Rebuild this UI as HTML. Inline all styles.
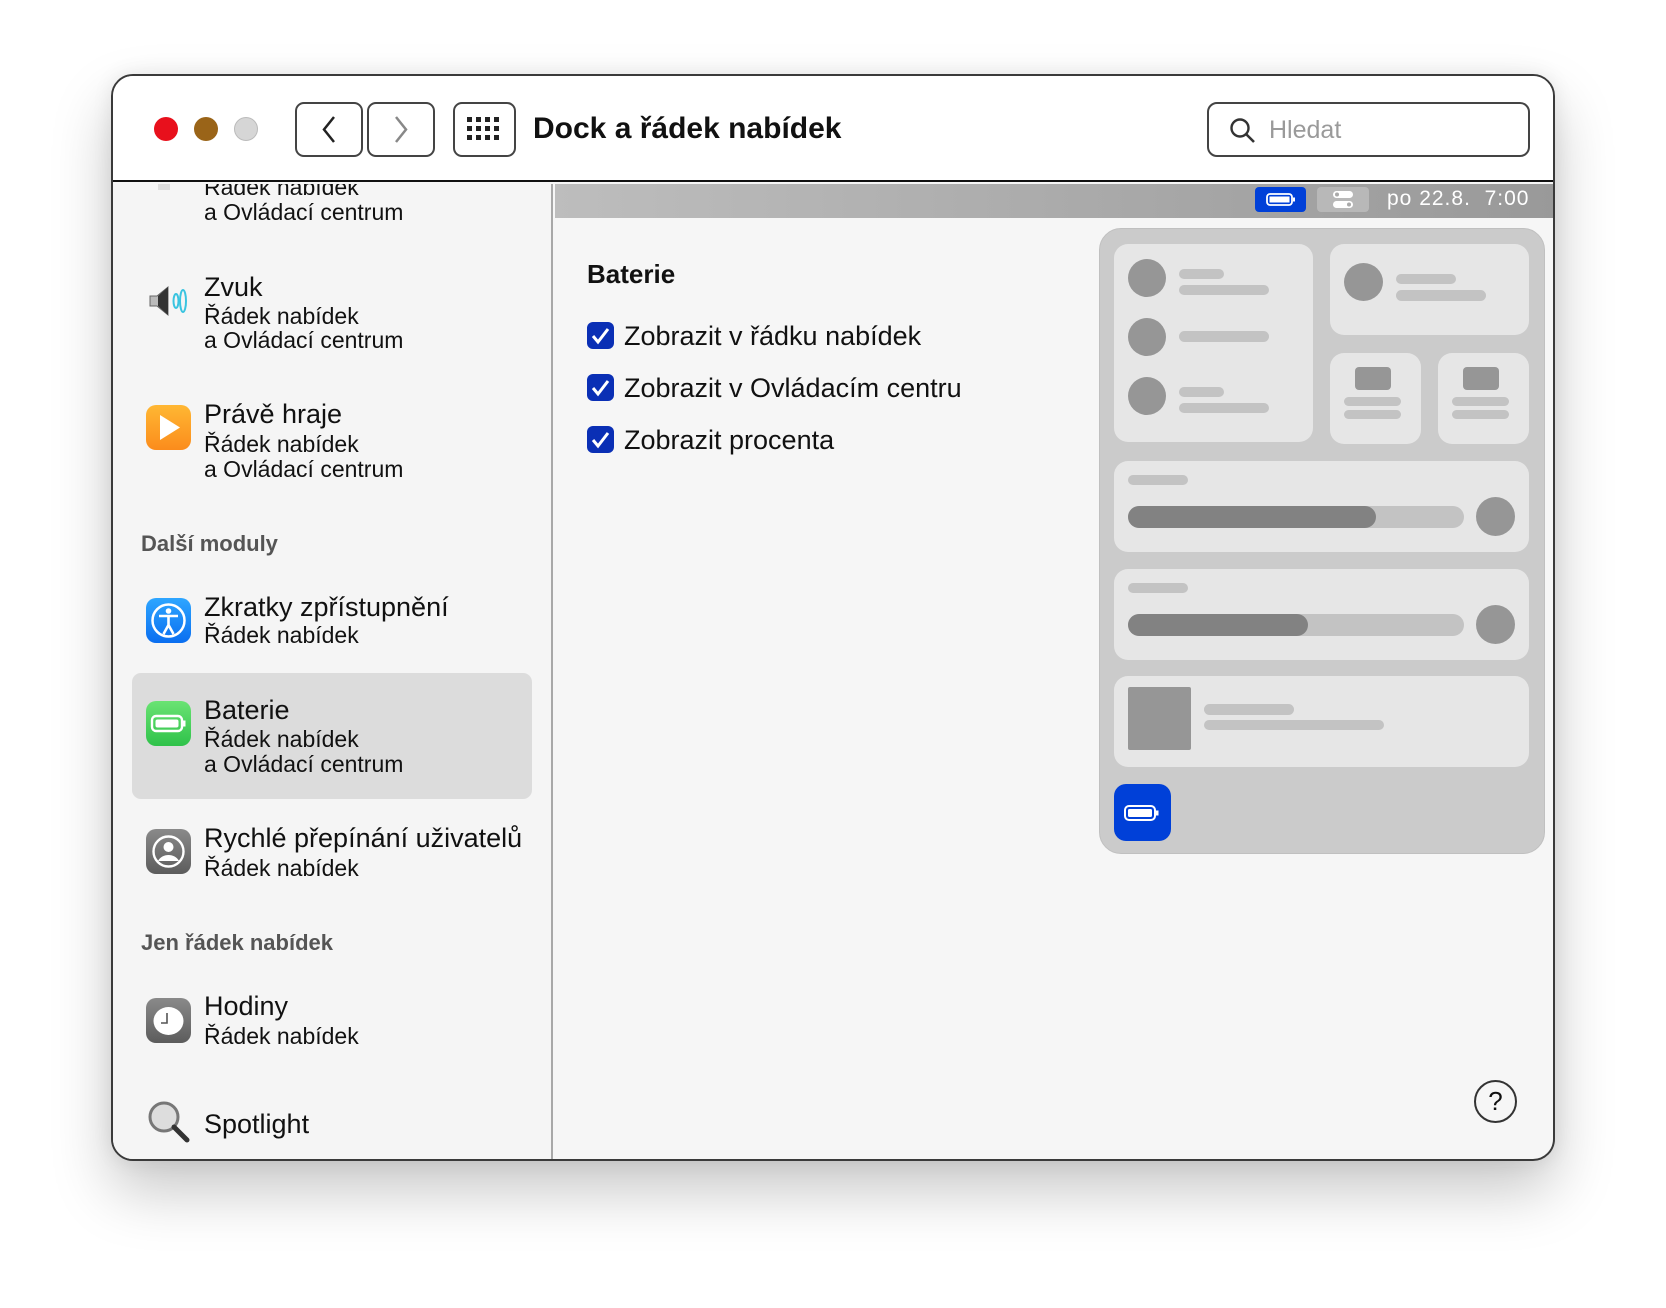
<!DOCTYPE html>
<html><head><meta charset="utf-8"><style>
*{margin:0;padding:0;box-sizing:border-box}
body{width:1666px;height:1308px;background:#fff;position:relative;overflow:hidden;font-family:"Liberation Sans",sans-serif;color:#111}
.a{position:absolute}
.win{left:111px;top:74px;width:1444px;height:1087px;border:2px solid #3a3a3a;border-radius:22px;overflow:hidden;background:#f6f6f6;box-shadow:0 30px 60px rgba(0,0,0,.22),0 0 20px rgba(0,0,0,.08)}
.t{position:absolute;white-space:nowrap;line-height:30px}
.ti{font-size:27px}
.su{font-size:23px}
.hd{font-size:22px;font-weight:bold;color:#555}
.ic{position:absolute;left:33px;width:45px;height:45px;border-radius:10px}
.tile{position:absolute;background:#e6e6e6;border-radius:14px}
.c{position:absolute;background:#969696;border-radius:50%}
.b{position:absolute;background:#c3c3c3;border-radius:8px}
.cb{position:absolute;left:474px;width:27px;height:27px;border-radius:6px;background:#0a2fb5}
</style></head><body>
<div class="a win">
 <!-- titlebar -->
 <div class="a" style="left:0;top:0;width:100%;height:106px;background:#fff;border-bottom:2px solid #111"></div>
 <div class="a" style="left:41px;top:41px;width:24px;height:24px;border-radius:50%;background:#e8101c"></div>
 <div class="a" style="left:81px;top:41px;width:24px;height:24px;border-radius:50%;background:#9a6418"></div>
 <div class="a" style="left:121px;top:41px;width:24px;height:24px;border-radius:50%;background:#d6d6d6;border:1px solid #bbb"></div>
 <div class="a" style="left:182px;top:26px;width:68px;height:55px;border:2px solid #444;border-radius:9px"><svg width="64" height="51"><path d="M37 13 L27 25.5 L37 38" fill="none" stroke="#222" stroke-width="2.5"/></svg></div>
 <div class="a" style="left:254px;top:26px;width:68px;height:55px;border:2px solid #444;border-radius:9px"><svg width="64" height="51"><path d="M27 13 L37 25.5 L27 38" fill="none" stroke="#888" stroke-width="2.5"/></svg></div>
 <div class="a" style="left:340px;top:26px;width:63px;height:55px;border:2px solid #444;border-radius:9px"><svg width="59" height="51"><g fill="#222">
 <rect x="12" y="13" width="5" height="5"/><rect x="21" y="13" width="5" height="5"/><rect x="30" y="13" width="5" height="5"/><rect x="39" y="13" width="5" height="5"/>
 <rect x="12" y="22" width="5" height="5"/><rect x="21" y="22" width="5" height="5"/><rect x="30" y="22" width="5" height="5"/><rect x="39" y="22" width="5" height="5"/>
 <rect x="12" y="31" width="5" height="5"/><rect x="21" y="31" width="5" height="5"/><rect x="30" y="31" width="5" height="5"/><rect x="39" y="31" width="5" height="5"/></g></svg></div>
 <div class="t" style="left:420px;top:36px;font-size:30px;font-weight:bold;line-height:34px">Dock a řádek nabídek</div>
 <div class="a" style="left:1094px;top:26px;width:323px;height:55px;border:2px solid #444;border-radius:10px">
  <svg class="a" style="left:20px;top:13px" width="28" height="28"><circle cx="11" cy="11" r="8.5" fill="none" stroke="#333" stroke-width="2.4"/><path d="M17 17 L25 25" stroke="#333" stroke-width="2.6"/></svg>
  <div class="t" style="left:60px;top:11px;font-size:25px;color:#9a9a9a">Hledat</div>
 </div>
 <!-- sidebar -->
 <div class="a" style="left:0;top:108px;width:440px;height:980px;background:#f5f5f5;border-right:2px solid #a8a8a8;overflow:hidden">
  <div class="a" style="left:45px;top:-4px;width:12px;height:10px;background:#ddd"></div>
  <div class="t su" style="left:91px;top:-12px">Řádek nabídek</div>
  <div class="t su" style="left:91px;top:13px">a Ovládací centrum</div>
  <svg class="a" style="left:34px;top:98px" width="44" height="38"><path d="M3 14h7l11-9v28l-11-9H3z" fill="#bbb" stroke="#666"/><path d="M11 14l10-9v28l-10-9z" fill="#333"/><ellipse cx="29" cy="19" rx="2.5" ry="7" fill="none" stroke="#3ac4e0" stroke-width="2"/><ellipse cx="36" cy="19" rx="3" ry="11" fill="none" stroke="#3ac4e0" stroke-width="2"/></svg>
  <div class="t ti" style="left:91px;top:88px">Zvuk</div>
  <div class="t su" style="left:91px;top:117px">Řádek nabídek</div>
  <div class="t su" style="left:91px;top:141px">a Ovládací centrum</div>
  <div class="ic" style="top:221px;background:linear-gradient(#ffb733,#fb8c1c)"><svg width="45" height="45"><path d="M14 10 L34 22.5 L14 35z" fill="#fff"/></svg></div>
  <div class="t ti" style="left:91px;top:215px">Právě hraje</div>
  <div class="t su" style="left:91px;top:245px">Řádek nabídek</div>
  <div class="t su" style="left:91px;top:270px">a Ovládací centrum</div>
  <div class="t hd" style="left:28px;top:345px">Další moduly</div>
  <div class="ic" style="top:414px;background:linear-gradient(#2ea6ff,#0a6ef0)"><svg width="45" height="45"><circle cx="22.5" cy="22.5" r="16" fill="none" stroke="#fff" stroke-width="2.5"/><circle cx="22.5" cy="13" r="2.8" fill="#fff"/><path d="M13 18h19M22.5 18v9M22.5 27l-5 9M22.5 27l5 9" stroke="#fff" stroke-width="2.6" fill="none"/></svg></div>
  <div class="t ti" style="left:91px;top:408px">Zkratky zpřístupnění</div>
  <div class="t su" style="left:91px;top:436px">Řádek nabídek</div>
  <div class="a" style="left:19px;top:489px;width:400px;height:126px;background:#dcdcdc;border-radius:9px"></div>
  <div class="ic" style="top:517px;background:linear-gradient(#6ae373,#2fc24a)"><svg width="45" height="45"><rect x="6" y="15" width="30" height="15" rx="4" fill="none" stroke="#fff" stroke-width="2.4"/><rect x="9.5" y="18.5" width="23" height="8" rx="2" fill="#fff"/><rect x="37" y="19.5" width="2.5" height="6" fill="#fff"/></svg></div>
  <div class="t ti" style="left:91px;top:511px">Baterie</div>
  <div class="t su" style="left:91px;top:540px">Řádek nabídek</div>
  <div class="t su" style="left:91px;top:565px">a Ovládací centrum</div>
  <div class="ic" style="top:645px;background:linear-gradient(#8a8a8a,#5c5c5c)"><svg width="45" height="45"><circle cx="22.5" cy="22.5" r="15" fill="none" stroke="#fff" stroke-width="2.4"/><circle cx="22.5" cy="18" r="5" fill="#fff"/><path d="M12 32c4-8 17-8 21 0" fill="#fff"/></svg></div>
  <div class="t ti" style="left:91px;top:639px">Rychlé přepínání uživatelů</div>
  <div class="t su" style="left:91px;top:669px">Řádek nabídek</div>
  <div class="t hd" style="left:28px;top:744px">Jen řádek nabídek</div>
  <div class="ic" style="top:814px;background:linear-gradient(#8a8a8a,#5c5c5c)"><svg width="45" height="45"><ellipse cx="22.5" cy="23" rx="15" ry="14" fill="#fff"/><path d="M21 15v10h-6" stroke="#555" stroke-width="1.6" fill="none"/></svg></div>
  <div class="t ti" style="left:91px;top:807px">Hodiny</div>
  <div class="t su" style="left:91px;top:837px">Řádek nabídek</div>
  <svg class="a" style="left:33px;top:915px" width="46" height="46"><circle cx="18" cy="18" r="14" fill="#ddd" stroke="#777" stroke-width="3"/><path d="M28 28 L41 41" stroke="#333" stroke-width="5" stroke-linecap="round"/></svg>
  <div class="t ti" style="left:91px;top:925px">Spotlight</div>
 </div>
 <!-- content -->
 <div class="a" style="left:442px;top:108px;width:1000px;height:34px;background:linear-gradient(90deg,#bdbdbd,#999)"></div>
 <div class="a" style="left:1142px;top:111px;width:51px;height:25px;background:#0040d8;border-radius:4px"><svg width="51" height="25"><rect x="12" y="7" width="25" height="11" rx="3" fill="none" stroke="#fff" stroke-width="1.8"/><rect x="14.5" y="9.5" width="20" height="6" fill="#fff"/><rect x="38" y="10.5" width="2" height="4" fill="#fff"/></svg></div>
 <div class="a" style="left:1204px;top:111px;width:52px;height:25px;background:#b8b8b8;border-radius:4px"><svg width="52" height="25"><rect x="16" y="4" width="20" height="7" rx="3.5" fill="#fff"/><rect x="16" y="14" width="20" height="7" rx="3.5" fill="#fff"/><circle cx="20" cy="7.5" r="2" fill="#aaa"/><circle cx="32" cy="17.5" r="2" fill="#aaa"/></svg></div>
 <div class="t" style="left:1274px;top:108px;font-size:21px;color:#fff;letter-spacing:1px">po 22.8.&nbsp; 7:00</div>
 <div class="t" style="left:474px;top:183px;font-size:26px;font-weight:bold">Baterie</div>
 <div class="cb" style="top:246px"><svg width="27" height="27"><path d="M6 14l5 6 10-13" stroke="#fff" stroke-width="3" fill="none"/></svg></div>
 <div class="t ti" style="left:511px;top:245px">Zobrazit v řádku nabídek</div>
 <div class="cb" style="top:298px"><svg width="27" height="27"><path d="M6 14l5 6 10-13" stroke="#fff" stroke-width="3" fill="none"/></svg></div>
 <div class="t ti" style="left:511px;top:297px">Zobrazit v Ovládacím centru</div>
 <div class="cb" style="top:350px"><svg width="27" height="27"><path d="M6 14l5 6 10-13" stroke="#fff" stroke-width="3" fill="none"/></svg></div>
 <div class="t ti" style="left:511px;top:349px">Zobrazit procenta</div>
 <!-- CC panel -->
 <div class="a" style="left:986px;top:152px;width:446px;height:626px;background:#cbcbcb;border-radius:22px;border:1px solid #c0c0c0">
  <div class="tile" style="left:14px;top:15px;width:199px;height:198px"></div>
  <div class="c" style="left:28px;top:30px;width:38px;height:38px"></div><div class="b" style="left:79px;top:40px;width:45px;height:10px"></div><div class="b" style="left:79px;top:56px;width:90px;height:10px"></div>
  <div class="c" style="left:28px;top:89px;width:38px;height:38px"></div><div class="b" style="left:79px;top:102px;width:90px;height:11px"></div>
  <div class="c" style="left:28px;top:148px;width:38px;height:38px"></div><div class="b" style="left:79px;top:158px;width:45px;height:10px"></div><div class="b" style="left:79px;top:174px;width:90px;height:10px"></div>
  <div class="tile" style="left:230px;top:15px;width:199px;height:91px"></div>
  <div class="c" style="left:244px;top:34px;width:39px;height:38px"></div>
  <div class="b" style="left:296px;top:45px;width:60px;height:10px"></div><div class="b" style="left:296px;top:61px;width:90px;height:11px"></div>
  <div class="tile" style="left:230px;top:124px;width:91px;height:91px"></div>
  <div class="a" style="left:255px;top:138px;width:36px;height:23px;background:#969696;border-radius:4px"></div><div class="b" style="left:244px;top:168px;width:57px;height:9px"></div><div class="b" style="left:244px;top:181px;width:57px;height:9px"></div>
  <div class="tile" style="left:338px;top:124px;width:91px;height:91px"></div>
  <div class="a" style="left:363px;top:138px;width:36px;height:23px;background:#969696;border-radius:4px"></div><div class="b" style="left:352px;top:168px;width:57px;height:9px"></div><div class="b" style="left:352px;top:181px;width:57px;height:9px"></div>
  <div class="tile" style="left:14px;top:232px;width:415px;height:91px"></div>
  <div class="b" style="left:28px;top:246px;width:60px;height:10px"></div>
  <div class="b" style="left:28px;top:277px;width:336px;height:22px;border-radius:11px"></div><div class="a" style="left:28px;top:277px;width:248px;height:22px;border-radius:11px;background:#828282"></div>
  <div class="c" style="left:376px;top:268px;width:39px;height:39px"></div>
  <div class="tile" style="left:14px;top:340px;width:415px;height:91px"></div>
  <div class="b" style="left:28px;top:354px;width:60px;height:10px"></div>
  <div class="b" style="left:28px;top:385px;width:336px;height:22px;border-radius:11px"></div><div class="a" style="left:28px;top:385px;width:180px;height:22px;border-radius:11px;background:#828282"></div>
  <div class="c" style="left:376px;top:376px;width:39px;height:39px"></div>
  <div class="tile" style="left:14px;top:447px;width:415px;height:91px"></div>
  <div class="a" style="left:28px;top:458px;width:63px;height:63px;background:#969696;border-radius:2px"></div>
  <div class="b" style="left:104px;top:475px;width:90px;height:11px"></div><div class="b" style="left:104px;top:491px;width:180px;height:10px"></div>
  <div class="a" style="left:14px;top:555px;width:57px;height:57px;background:#0040d8;border-radius:12px"><svg width="57" height="57"><rect x="11" y="22" width="30" height="14" rx="4" fill="none" stroke="#fff" stroke-width="2"/><rect x="14" y="25" width="24" height="8" rx="1.5" fill="#fff"/><rect x="42" y="26.5" width="2.5" height="5" fill="#fff"/></svg></div>
 </div>
 <div class="a" style="left:1361px;top:1004px;width:43px;height:43px;border:2px solid #333;border-radius:50%;text-align:center;font-size:26px;line-height:38px">?</div>
</div>
</body></html>
